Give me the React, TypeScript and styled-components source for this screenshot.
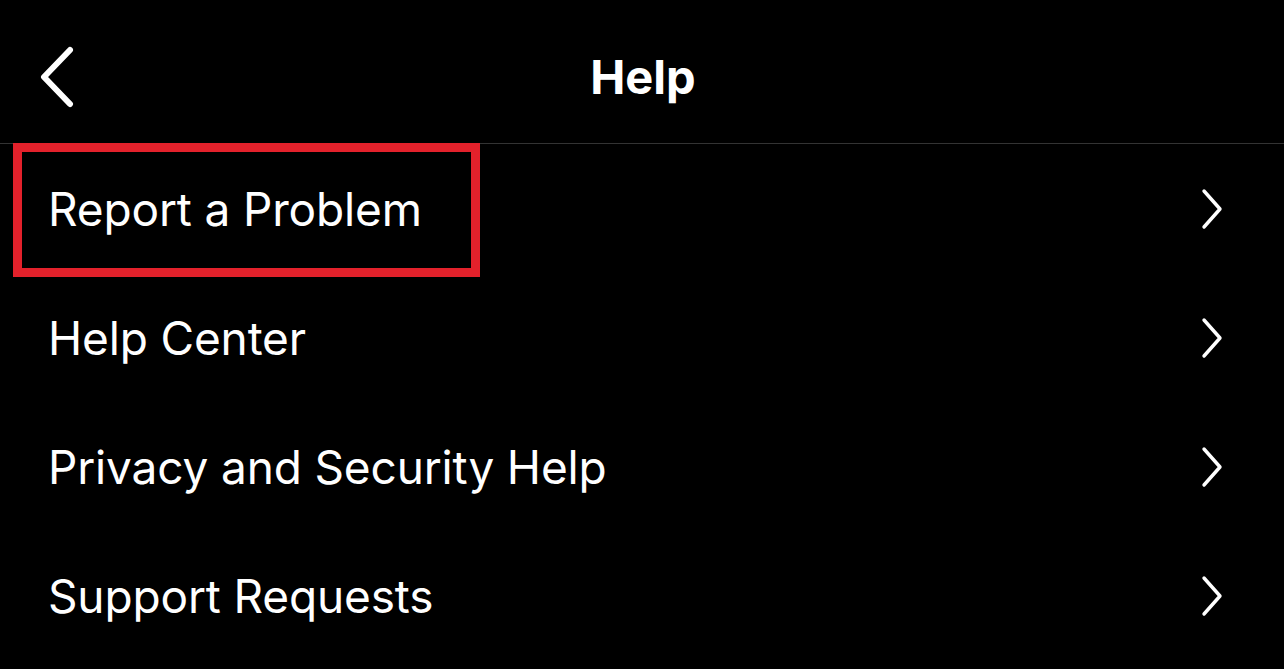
import styled, { createGlobalStyle } from "styled-components";

const GlobalStyle = createGlobalStyle`
  html, body {
    margin: 0;
    padding: 0;
    background: #000;
  }
  body {
    font-family: Inter, "Noto Sans", "Liberation Sans", sans-serif;
    color: #fff;
  }
`;

const items = [
  { label: "Report a Problem", highlighted: true },
  { label: "Help Center" },
  { label: "Privacy and Security Help" },
  { label: "Support Requests" },
];

function ChevronLeft() {
  return (
    <svg width="40" height="62" viewBox="0 0 40 62" fill="none">
      <path
        d="M33 4 L7 31 L33 58"
        stroke="#fff"
        strokeWidth="6"
        strokeLinecap="round"
        strokeLinejoin="round"
      />
    </svg>
  );
}

function ChevronRight() {
  return (
    <svg width="26" height="44" viewBox="0 0 26 44" fill="none">
      <path
        d="M5 4 L21 22 L5 40"
        stroke="#fff"
        strokeWidth="3.4"
        strokeLinecap="round"
        strokeLinejoin="round"
      />
    </svg>
  );
}

function App() {
  return (
    <StScreen>
      <GlobalStyle />
      <StHeader>
        <StBackButton>
          <ChevronLeft />
        </StBackButton>
        <StTitle>Help</StTitle>
        <span />
      </StHeader>
      <StList>
        {items.map((item) => (
          <StRow key={item.label}>
            <StRowLabel>{item.label}</StRowLabel>
            <ChevronRight />
            {item.highlighted && <StHighlight />}
          </StRow>
        ))}
      </StList>
    </StScreen>
  );
}

const StScreen = styled.div`
  width: 1284px;
  height: 669px;
  background: #000;
  overflow: hidden;
`;

const StHeader = styled.header`
  display: grid;
  grid-template-columns: 200px 1fr 200px;
  align-items: center;
  height: 144px;
  border-bottom: 1px solid #333;
  padding-top: 10px;
  box-sizing: border-box;
`;

const StBackButton = styled.div`
  display: flex;
  align-items: center;
  padding-left: 37px;
  height: 62px;
`;

const StTitle = styled.h1`
  margin: 0;
  text-align: center;
  font-size: 47px;
  font-weight: 700;
  letter-spacing: 0;
  transform: translateX(1px);
`;

const StList = styled.div`
  display: flex;
  flex-direction: column;
`;

const StRow = styled.div`
  position: relative;
  display: flex;
  align-items: center;
  justify-content: space-between;
  height: 129px;
  padding: 0 59px 0 48px;
`;

const StRowLabel = styled.span`
  font-size: 46px;
  font-weight: 400;
  letter-spacing: -0.15px;
`;

const StHighlight = styled.div`
  position: absolute;
  left: 13px;
  top: -1px;
  width: 467px;
  height: 134px;
  box-sizing: border-box;
  border: 9px solid #e3212b;
  pointer-events: none;
`;

export default App;
